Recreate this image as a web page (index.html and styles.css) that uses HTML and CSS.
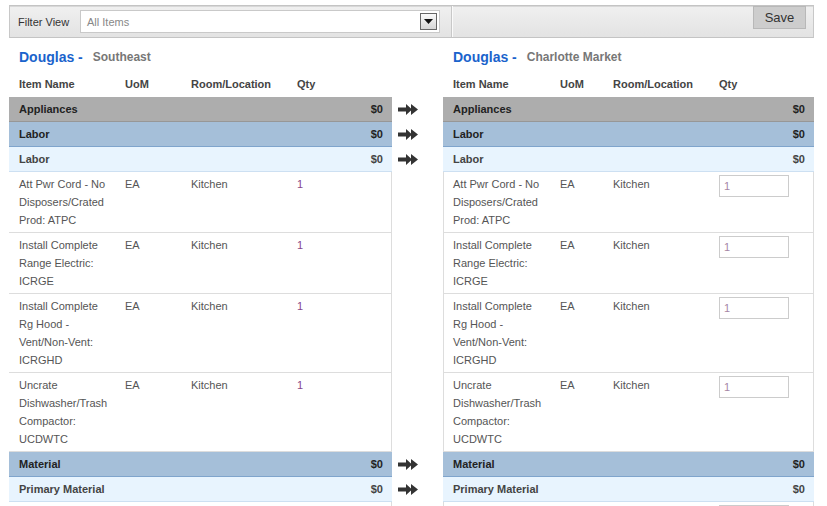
FILE: index.html
```html
<!DOCTYPE html>
<html>
<head>
<meta charset="utf-8">
<link rel="stylesheet" href="styles.css">
</head>
<body>
<div class="page">
  <div class="toolbar">
    <div class="filter">
      <span class="filter-label">Filter View</span>
      <div class="select">
        <span class="select-text">All Items</span>
        <span class="select-btn"><svg width="9" height="5" viewBox="0 0 9 5"><path d="M0 0h9L4.5 5z" fill="#111"/></svg></span>
      </div>
    </div>
    <div class="actions"><button class="save">Save</button></div>
  </div>

  <div class="board">
    <div class="title"><span class="owner">Douglas -</span><span class="market">Southeast</span></div>
    <div class="gap"></div>
    <div class="title"><span class="owner">Douglas -</span><span class="market">Charlotte Market</span></div>

    <div class="cols cols-left"><span>Item Name</span><span>UoM</span><span>Room/Location</span><span>Qty</span></div>
    <div class="gap"></div>
    <div class="cols cols-right"><span>Item Name</span><span>UoM</span><span>Room/Location</span><span>Qty</span></div>

    <div class="group grey"><span>Appliances</span><span>$0</span></div>
    <div class="arrow-cell"><svg class="arrow" width="20" height="11" viewBox="0 0 20 11"><polygon points="0,3.5 8,3.5 8,0 13,4.5 13,0 20,5.5 13,11 13,6.5 8,11 8,7.5 0,7.5" fill="#333"/></svg></div>
    <div class="group grey"><span>Appliances</span><span>$0</span></div>

    <div class="group blue"><span>Labor</span><span>$0</span></div>
    <div class="arrow-cell"><svg class="arrow" width="20" height="11" viewBox="0 0 20 11"><polygon points="0,3.5 8,3.5 8,0 13,4.5 13,0 20,5.5 13,11 13,6.5 8,11 8,7.5 0,7.5" fill="#333"/></svg></div>
    <div class="group blue"><span>Labor</span><span>$0</span></div>

    <div class="group light"><span>Labor</span><span>$0</span></div>
    <div class="arrow-cell"><svg class="arrow" width="20" height="11" viewBox="0 0 20 11"><polygon points="0,3.5 8,3.5 8,0 13,4.5 13,0 20,5.5 13,11 13,6.5 8,11 8,7.5 0,7.5" fill="#333"/></svg></div>
    <div class="group light"><span>Labor</span><span>$0</span></div>

    <div class="item item-left"><div class="name">Att Pwr Cord - No Disposers/Crated Prod: ATPC</div><div>EA</div><div>Kitchen</div><div class="qty">1</div></div>
    <div class="gap"></div>
    <div class="item item-right"><div class="name">Att Pwr Cord - No Disposers/Crated Prod: ATPC</div><div>EA</div><div>Kitchen</div><div><div class="qty-input">1</div></div></div>

    <div class="item item-left"><div class="name">Install Complete Range Electric: ICRGE</div><div>EA</div><div>Kitchen</div><div class="qty">1</div></div>
    <div class="gap"></div>
    <div class="item item-right"><div class="name">Install Complete Range Electric: ICRGE</div><div>EA</div><div>Kitchen</div><div><div class="qty-input">1</div></div></div>

    <div class="item item-left"><div class="name">Install Complete Rg Hood - Vent/Non-Vent: ICRGHD</div><div>EA</div><div>Kitchen</div><div class="qty">1</div></div>
    <div class="gap"></div>
    <div class="item item-right"><div class="name">Install Complete Rg Hood - Vent/Non-Vent: ICRGHD</div><div>EA</div><div>Kitchen</div><div><div class="qty-input">1</div></div></div>

    <div class="item item-left"><div class="name">Uncrate Dishwasher/Trash Compactor: UCDWTC</div><div>EA</div><div>Kitchen</div><div class="qty">1</div></div>
    <div class="gap"></div>
    <div class="item item-right"><div class="name">Uncrate Dishwasher/Trash Compactor: UCDWTC</div><div>EA</div><div>Kitchen</div><div><div class="qty-input">1</div></div></div>

    <div class="group blue"><span>Material</span><span>$0</span></div>
    <div class="arrow-cell"><svg class="arrow" width="20" height="11" viewBox="0 0 20 11"><polygon points="0,3.5 8,3.5 8,0 13,4.5 13,0 20,5.5 13,11 13,6.5 8,11 8,7.5 0,7.5" fill="#333"/></svg></div>
    <div class="group blue"><span>Material</span><span>$0</span></div>

    <div class="group light"><span>Primary Material</span><span>$0</span></div>
    <div class="arrow-cell"><svg class="arrow" width="20" height="11" viewBox="0 0 20 11"><polygon points="0,3.5 8,3.5 8,0 13,4.5 13,0 20,5.5 13,11 13,6.5 8,11 8,7.5 0,7.5" fill="#333"/></svg></div>
    <div class="group light"><span>Primary Material</span><span>$0</span></div>

    <div class="item item-left item-tail"><div class="name"></div><div></div><div></div><div></div></div>
    <div class="gap"></div>
    <div class="item item-right item-tail"><div class="name"></div><div></div><div></div><div><div class="qty-input"></div></div></div>
  </div>
</div>
</body>
</html>
```

FILE: styles.css
```css
html, body {
  margin: 0;
  padding: 0;
  height: 100%;
  overflow: hidden;
  background: #fff;
}

body {
  font-family: "Liberation Sans", Arial, sans-serif;
  font-size: 11px;
  color: #555;
}

.page {
  padding: 5px 0 0 9px;
  width: 805px;
}

/* Toolbar */
.toolbar {
  display: flex;
  height: 31px;
  border: 1px solid #c8c8c8;
  border-top-color: #c4c4c4;
  border-bottom-color: #c4c4c4;
  background: linear-gradient(#f0f0f0, #e3e3e3);
  box-shadow: inset 0 1px 0 #d8d8d8;
}

.filter {
  display: flex;
  align-items: center;
  width: 442px;
  padding-left: 8px;
  box-sizing: border-box;
  border-right: 1px solid #c8c8c8;
  box-shadow: 1px 0 0 #fafafa;
}

.filter-label {
  color: #333;
  font-size: 11px;
  width: 62px;
}

.select {
  display: flex;
  align-items: center;
  justify-content: space-between;
  width: 360px;
  height: 23px;
  box-sizing: border-box;
  background: #fff;
  border: 1px solid #c9c9c9;
  padding: 0 2px 0 6px;
}

.select-text {
  color: #888;
}

.select-btn {
  display: flex;
  align-items: center;
  justify-content: center;
  width: 17px;
  height: 17px;
  box-sizing: border-box;
  border: 1px solid #666;
  background: linear-gradient(#fafafa, #d6d6d6);
}

.actions {
  flex: 1;
  display: flex;
  justify-content: flex-end;
  align-items: flex-start;
  padding-right: 7px;
}

.save {
  margin: 0;
  width: 53px;
  height: 23px;
  border: 1px solid #b8b8b8;
  background: #cdcdcd;
  color: #333;
  font-family: "Liberation Sans", Arial, sans-serif;
  font-size: 13px;
  padding: 0;
}

/* Board */
.board {
  display: grid;
  grid-template-columns: 383px 51px 371px;
}

.title {
  height: 28px;
  margin-top: 4px;
  padding: 1px 0 0 10px;
  box-sizing: border-box;
  display: flex;
  align-items: center;
  gap: 10px;
}

.owner {
  color: #1a63cc;
  font-weight: bold;
  font-size: 14px;
}

.market {
  color: #777;
  font-weight: bold;
  font-size: 12px;
}

.cols {
  display: grid;
  padding: 5px 0 4px 10px;
  line-height: 18px;
  font-weight: bold;
  color: #444;
}

.cols-left, .item-left {
  grid-template-columns: 106px 66px 106px 1fr;
}

.cols-right, .item-right {
  grid-template-columns: 107px 53px 106px 1fr;
}

.group {
  height: 24px;
  display: flex;
  align-items: center;
  justify-content: space-between;
  padding: 0 9px 0 10px;
  font-weight: bold;
}

.group.grey {
  background: #adadad;
  border-bottom: 1px solid #979797;
  color: #222;
}

.group.blue {
  background: #a5bfd9;
  border-bottom: 1px solid #7fa4cc;
  color: #222;
}

.group.light {
  background: #e8f4fe;
  border-bottom: 1px solid #cde0f2;
  color: #444;
}

.arrow-cell {
  display: flex;
  align-items: center;
  justify-content: flex-start;
  padding-left: 6px;
  height: 25px;
}

.item {
  display: grid;
  padding: 3px 0 3px 10px;
  line-height: 18px;
  border-bottom: 1px solid #ddd;
  color: #555;
}

.item-left {
  border-right: 1px solid #ddd;
}

.item-right {
  padding-left: 9px;
  border-left: 1px solid #ddd;
  border-right: 1px solid #ddd;
}

.item-tail {
  min-height: 54px;
}

.name {
  padding-right: 12px;
}

.qty {
  color: #87468a;
}

.qty-input {
  width: 70px;
  height: 22px;
  box-sizing: border-box;
  border: 1px solid #cccccc;
  padding-left: 4px;
  line-height: 20px;
  color: #a587a5;
  background: #fff;
}
```
